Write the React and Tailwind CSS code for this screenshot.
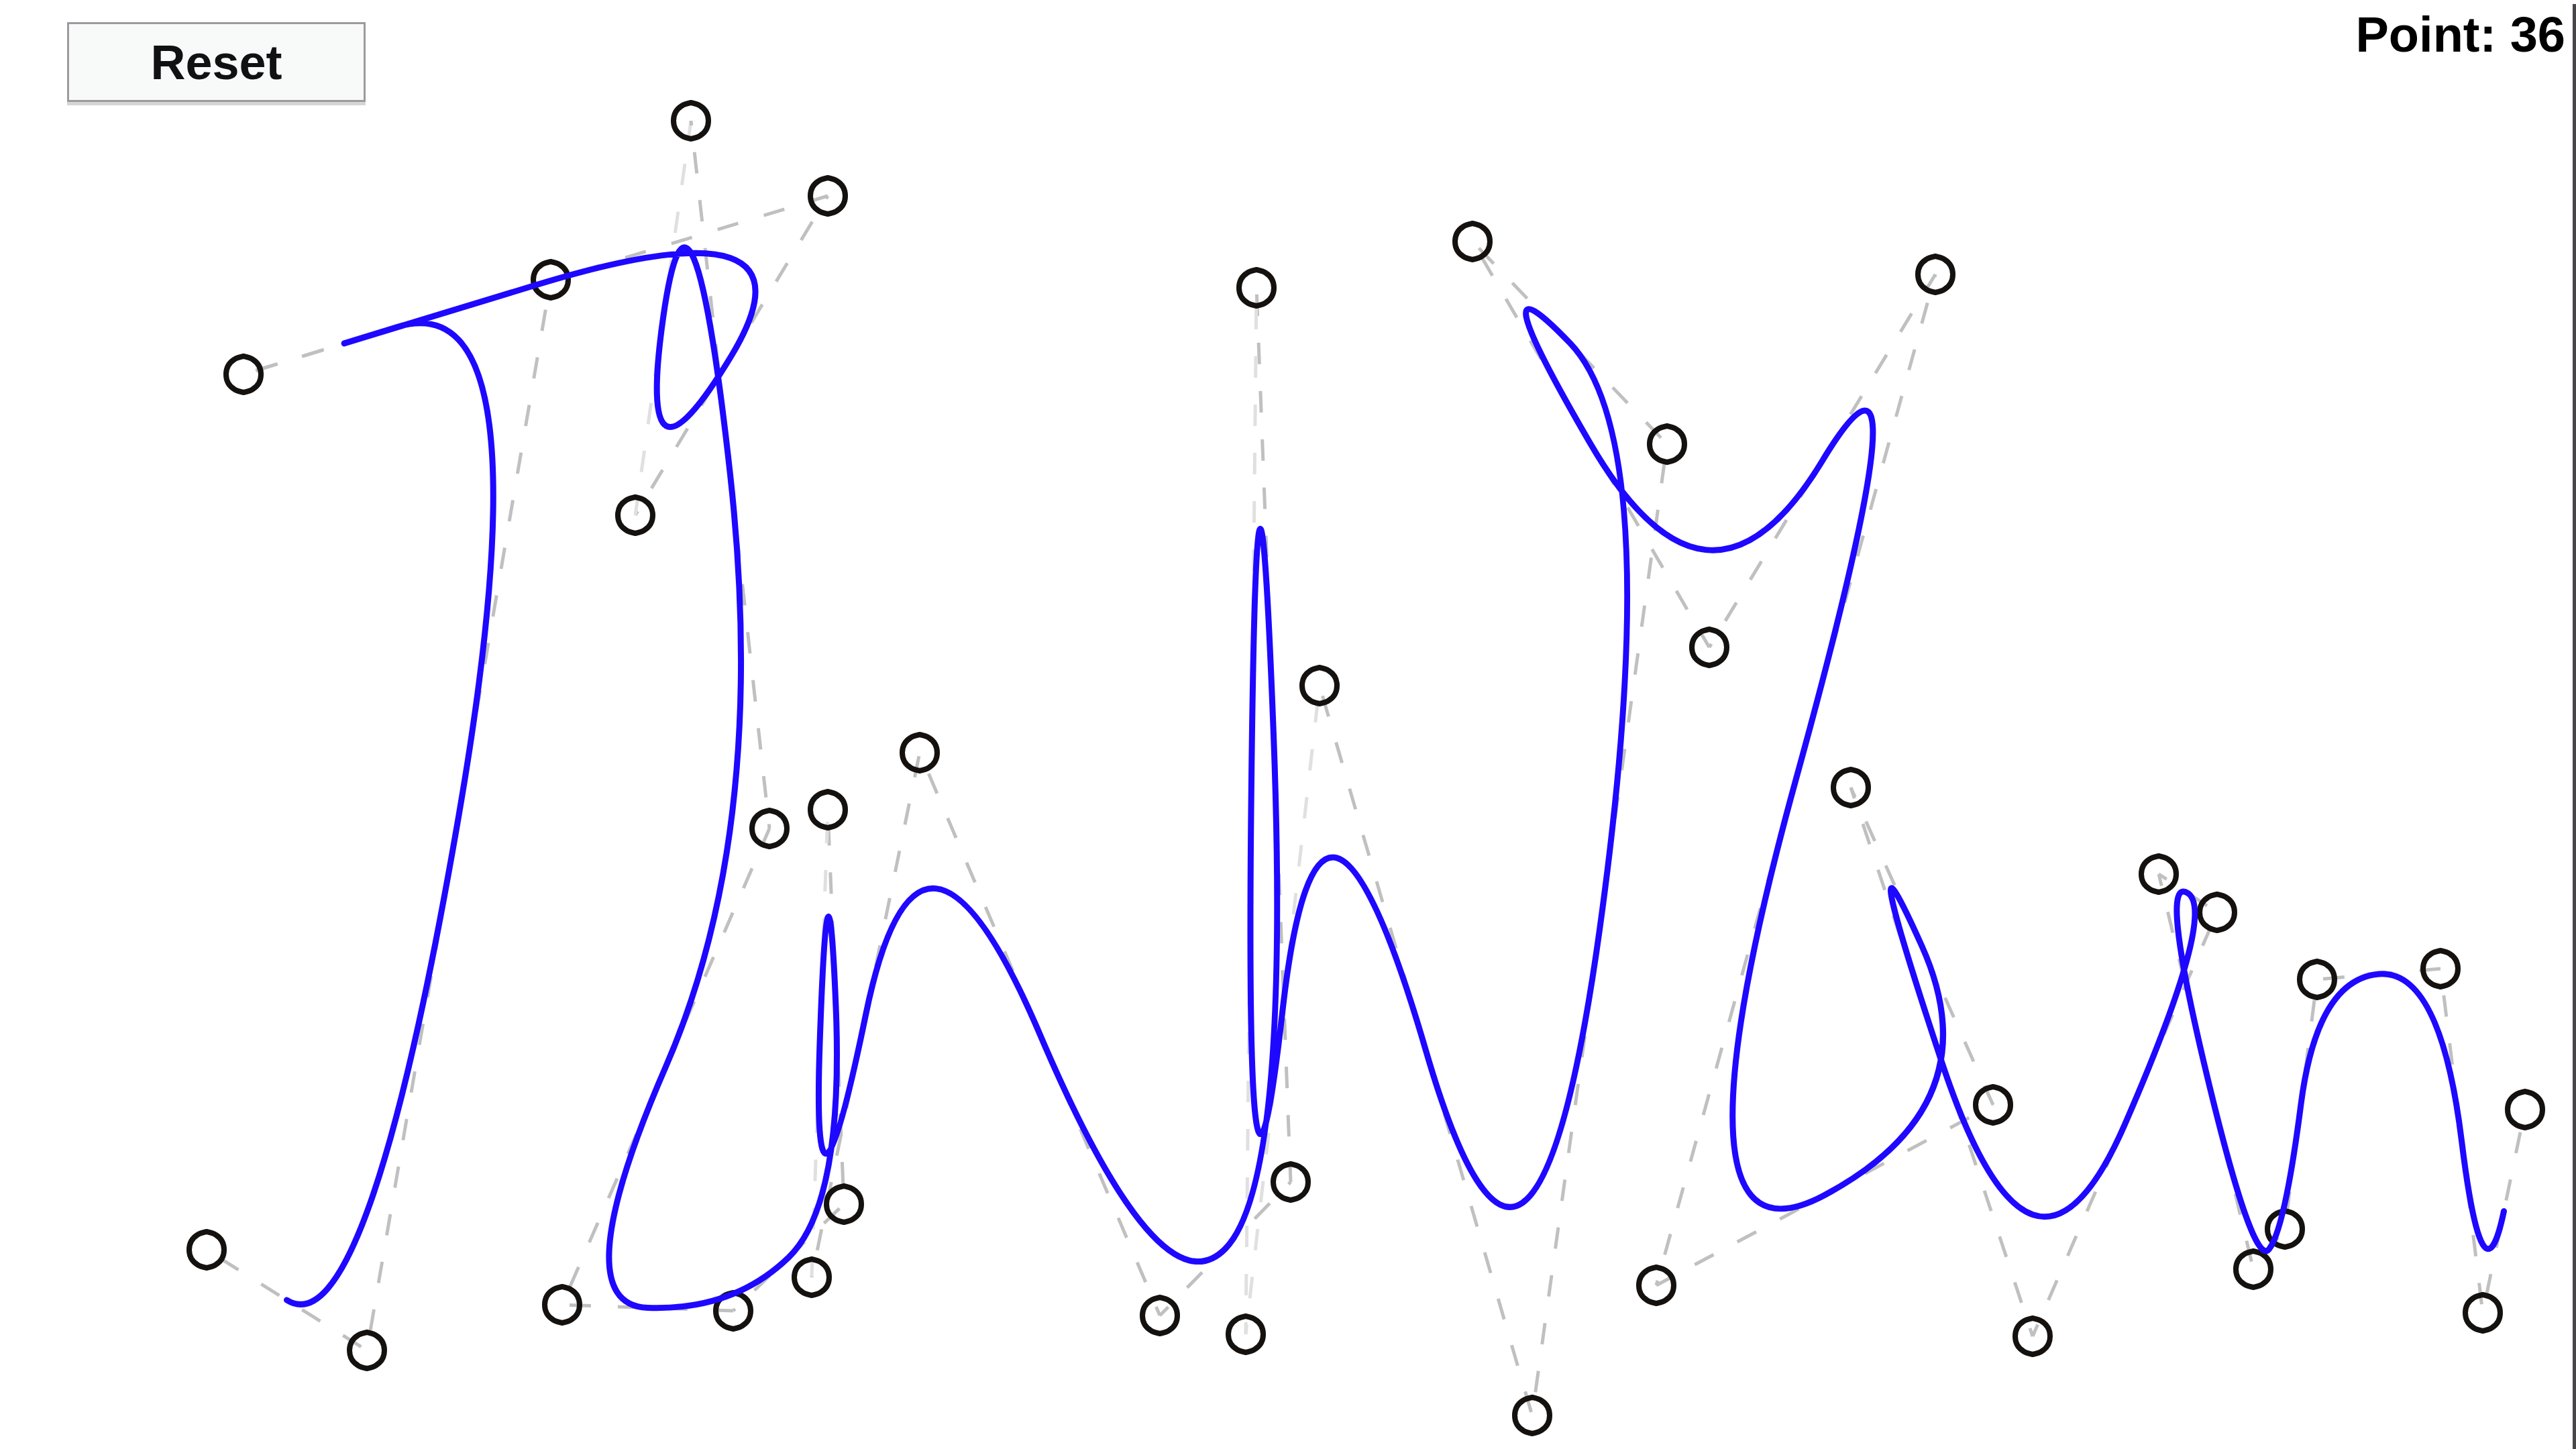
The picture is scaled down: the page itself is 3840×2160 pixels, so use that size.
const points = [
  [308, 1863], [547, 2013], [821, 417], [363, 558], [1234, 292], [947, 768],
  [1030, 180], [1147, 1235], [838, 1945], [1093, 1954], [1258, 1795], [1234, 1207],
  [1210, 1904], [1371, 1122], [1729, 1961], [1924, 1762], [1873, 429], [1857, 1989],
  [1967, 1022], [2284, 2110], [2485, 662], [2195, 360], [2548, 965], [2885, 409],
  [2469, 1916], [2971, 1647], [2759, 1174], [3030, 1992], [3305, 1360], [3218, 1303],
  [3359, 1892], [3406, 1832], [3454, 1460], [3638, 1444], [3701, 1957], [3764, 1654],
];

// Legs that double back almost on top of a neighbour are drawn fainter.
const FAINT_LEGS = new Set([5, 11, 16, 17]);

// Each leg carries on the dash pattern where the previous one stopped.
let travelled = -24;
const legs = points.slice(1).map((to, i) => {
  const from = points[i];
  const leg = { from, to, offset: Math.round(travelled), faint: FAINT_LEGS.has(i) };
  travelled += Math.hypot(to[0] - from[0], to[1] - from[1]);
  return leg;
});

const mid = (a, b) => [(a[0] + b[0]) / 2, (a[1] + b[1]) / 2];

// Uniform quadratic B-spline: each span joins the midpoints of neighbouring control legs.
function splinePath(pts) {
  let d = `M ${mid(pts[0], pts[1]).join(" ")}`;
  for (let i = 1; i < pts.length - 1; i++) {
    d += ` Q ${pts[i].join(" ")} ${mid(pts[i], pts[i + 1]).join(" ")}`;
  }
  return d;
}

// Slightly pointed ring used as the control point handle.
const RING =
  "M0 -27 C5 -26 10 -25 14 -22 C22 -17 26 -9 26 0 C26 9 22 17 14 22 C10 25 5 26 0 27 C-5 26 -10 25 -14 22 C-22 17 -26 9 -26 0 C-26 -9 -22 -17 -14 -22 C-10 -25 -5 -26 0 -27 Z";

function Curve() {
  return (
    <svg
      viewBox="0 0 3840 2160"
      className="block h-auto w-full"
      fill="none"
      role="img"
      aria-label="Spline curve with control points"
    >
      {legs.map(({ from, to, offset, faint }) => (
        <line
          key={offset}
          x1={from[0]}
          y1={from[1]}
          x2={to[0]}
          y2={to[1]}
          stroke={faint ? "#e0e0e0" : "#c0c0c0"}
          strokeWidth="5"
          strokeDasharray="32 40"
          strokeDashoffset={offset}
        />
      ))}
      {points.map(([x, y]) => (
        <path
          key={`${x}-${y}`}
          d={RING}
          transform={`translate(${x} ${y})`}
          stroke="#14110f"
          strokeWidth="8"
          strokeLinejoin="round"
        />
      ))}
      <path
        d={splinePath(points)}
        stroke="#1e08ff"
        strokeWidth="9"
        strokeLinecap="round"
        strokeLinejoin="round"
      />
    </svg>
  );
}

export default function App() {
  return (
    <main className="grid min-h-screen bg-white font-['Liberation_Sans',Arial,sans-serif] font-bold text-black">
      <header className="z-10 col-start-1 row-start-1 flex items-start justify-between self-start pl-[100px]">
        <button
          type="button"
          className="mt-[33px] h-[119px] w-[445px] border-[3px] border-[#9d9a9f] bg-[#f8faf9] text-[72px] leading-[80px] text-[#111113] shadow-[0_5px_0_#d6d6d6]"
        >
          Reset
        </button>
        <output className="mt-3 mr-4 text-[74px] leading-[80px]">
          Point: {points.length}
        </output>
      </header>
      <section className="col-start-1 row-start-1">
        <Curve />
      </section>
      <div className="z-10 col-start-1 row-start-1 mt-[6px] w-[5px] justify-self-end bg-[#4a454a]" />
    </main>
  );
}
